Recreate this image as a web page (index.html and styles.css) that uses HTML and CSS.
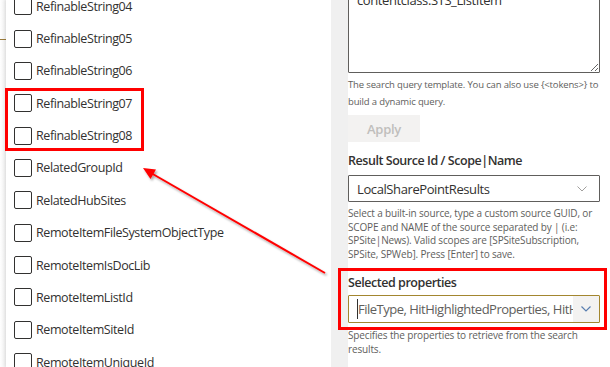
FILE: index.html
```html
<!DOCTYPE html>
<html lang="en">
<head>
  <meta charset="UTF-8">
  <title>Search properties</title>
  <link rel="stylesheet" href="styles.css">
</head>
<body>

  <div class="page">
    <div class="edge"><div class="edge-line"></div></div>

    <div class="picker">
      <div class="list">
        <label class="row"><span class="box"></span>RefinableString04</label>
        <label class="row"><span class="box"></span>RefinableString05</label>
        <label class="row"><span class="box"></span>RefinableString06</label>
        <label class="row"><span class="box"></span>RefinableString07</label>
        <label class="row"><span class="box"></span>RefinableString08</label>
        <label class="row"><span class="box"></span>RelatedGroupId</label>
        <label class="row"><span class="box"></span>RelatedHubSites</label>
        <label class="row"><span class="box"></span>RemoteItemFileSystemObjectType</label>
        <label class="row"><span class="box"></span>RemoteItemIsDocLib</label>
        <label class="row"><span class="box"></span>RemoteItemListId</label>
        <label class="row"><span class="box"></span>RemoteItemSiteId</label>
        <label class="row"><span class="box"></span>RemoteItemUniqueId</label>
      </div>
    </div>

    <div class="gutter"></div>

    <div class="pane">
      <textarea class="query" readonly>contentclass:STS_ListItem</textarea>
      <p class="help help-first">The search query template. You can also use {&lt;tokens&gt;} to<br>build a dynamic query.</p>
      <button type="button" class="apply" disabled>Apply</button>

      <div class="field-label">Result Source Id / Scope|Name</div>
      <div class="dropdown">
        <span class="dd-text">LocalSharePointResults</span>
        <svg class="chev" width="10" height="6" viewBox="0 0 10 6"><path d="M0.5 0.5 L5 5 L9.5 0.5" fill="none" stroke="#a19f9d" stroke-width="1"/></svg>
      </div>
      <p class="help help-source">Select a built-in source, type a custom source GUID, or<br>SCOPE and NAME of the source separated by | (i.e:<br>SPSite|News). Valid scopes are [SPSiteSubscription,<br>SPSite, SPWeb]. Press [Enter] to save.</p>

      <div class="field-label label-props">Selected properties</div>
      <div class="combo">
        <span class="caret"></span>
        <span class="combo-text">FileType, HitHighlightedProperties, HitHighlightedSummary</span>
        <span class="combo-btn">
          <svg width="10" height="6" viewBox="0 0 10 6"><path d="M0.5 0.5 L5 5 L9.5 0.5" fill="none" stroke="#5a7fb0" stroke-width="1.2"/></svg>
        </span>
      </div>
      <p class="help help-props">Specifies the properties to retrieve from the search<br>results.</p>
    </div>

    <!-- annotations drawn over the screenshot -->
    <div class="mark mark-left"></div>
    <div class="mark mark-right"></div>
    <svg class="arrow" width="610" height="367" viewBox="0 0 610 367">
      <defs>
        <filter id="sh" x="-10%" y="-10%" width="120%" height="130%">
          <feDropShadow dx="1.5" dy="2" stdDeviation="1" flood-color="#000" flood-opacity="0.35"/>
        </filter>
      </defs>
      <g filter="url(#sh)">
        <line x1="325" y1="273" x2="151" y2="173" stroke="#f00" stroke-width="2"/>
        <polygon points="143,168 156,169.5 150.5,179" fill="#f00"/>
      </g>
    </svg>
  </div>

</body>
</html>
```

FILE: styles.css
```css
body {
  margin: 0;
  font-family: "Open Sans", "Noto Sans", sans-serif;
  color: #323130;
  background: #fff;
}
.page {
  position: relative;
  display: flex;
  width: 610px;
  height: 367px;
  overflow: hidden;
}
.edge {
  width: 6px;
  background: linear-gradient(to right, #fff, #eeeeee);
}
.edge-line {
  margin-top: 39px;
  height: 1px;
  background: #9a7a3a;
}
.picker {
  width: 325px;
  background: #fff;
  box-shadow: -1px 0 3px rgba(0, 0, 0, 0.08);
}
.list {
  margin-top: -10px;
}
.row {
  display: flex;
  align-items: center;
  gap: 4px;
  height: 32.36px;
  padding-left: 8px;
  font-size: 12.5px;
  letter-spacing: -0.4px;
  color: #323130;
}
.box {
  width: 16px;
  height: 16px;
  border: 1px solid #323130;
  border-radius: 2px;
  flex: none;
}
.gutter {
  width: 17px;
  background: #f0f0f0;
}
.pane {
  width: 252px;
  background: #fff;
}
.query {
  display: block;
  box-sizing: border-box;
  width: 252px;
  height: 90px;
  margin-top: -17px;
  padding: 6px 8px;
  border: 1px solid #605e5c;
  border-radius: 1px;
  font-family: "Open Sans", sans-serif;
  font-size: 13px;
  line-height: 20px;
  letter-spacing: -0.4px;
  color: #323130;
  outline: none;
}
.help {
  margin: 0;
  font-size: 10px;
  letter-spacing: -0.15px;
  white-space: nowrap;
  color: #605e5c;
}
.help-first {
  margin-top: 4px;
  font-size: 9.5px;
  line-height: 16.5px;
}
.apply {
  display: block;
  width: 72px;
  height: 27px;
  margin-top: 5px;
  border: none;
  background: #f3f2f1;
  color: #c0bebc;
  font-family: "Open Sans", sans-serif;
  font-size: 13px;
  font-weight: 600;
  letter-spacing: -0.3px;
}
.field-label {
  margin-top: 11px;
  font-size: 12.5px;
  font-weight: 600;
  line-height: 16px;
  letter-spacing: -0.45px;
  color: #323130;
}
.dropdown {
  display: flex;
  align-items: center;
  justify-content: space-between;
  box-sizing: border-box;
  height: 27px;
  margin-top: 6px;
  padding: 0 12px 0 8px;
  border: 1px solid #605e5c;
  border-radius: 1px;
  font-size: 13px;
  letter-spacing: -0.4px;
}
.help-source {
  margin-top: 5px;
  line-height: 13.6px;
}
.label-props {
  margin-top: 14px;
}
.combo {
  display: flex;
  align-items: center;
  box-sizing: border-box;
  height: 28px;
  margin-top: 4px;
  border: 1px solid #a3862f;
  border-radius: 1px;
  overflow: hidden;
}
.caret {
  flex: none;
  width: 1px;
  height: 20px;
  margin-left: 8px;
  background: #323130;
}
.combo-text {
  flex: 1;
  overflow: hidden;
  white-space: nowrap;
  font-size: 13px;
  letter-spacing: -0.5px;
  color: #605e5c;
}
.combo-btn {
  flex: none;
  display: flex;
  align-items: center;
  justify-content: center;
  width: 26px;
  height: 100%;
  background: #f3f2f1;
}
.help-props {
  margin-top: 5px;
  line-height: 14px;
}
.mark {
  position: absolute;
  border: 3px solid #f00;
  box-sizing: border-box;
}
.mark-left {
  left: 5px;
  top: 88px;
  width: 139px;
  height: 63px;
}
.mark-right {
  left: 338px;
  top: 268px;
  width: 269px;
  height: 62px;
}
.arrow {
  position: absolute;
  left: 0;
  top: 0;
  pointer-events: none;
}
```
